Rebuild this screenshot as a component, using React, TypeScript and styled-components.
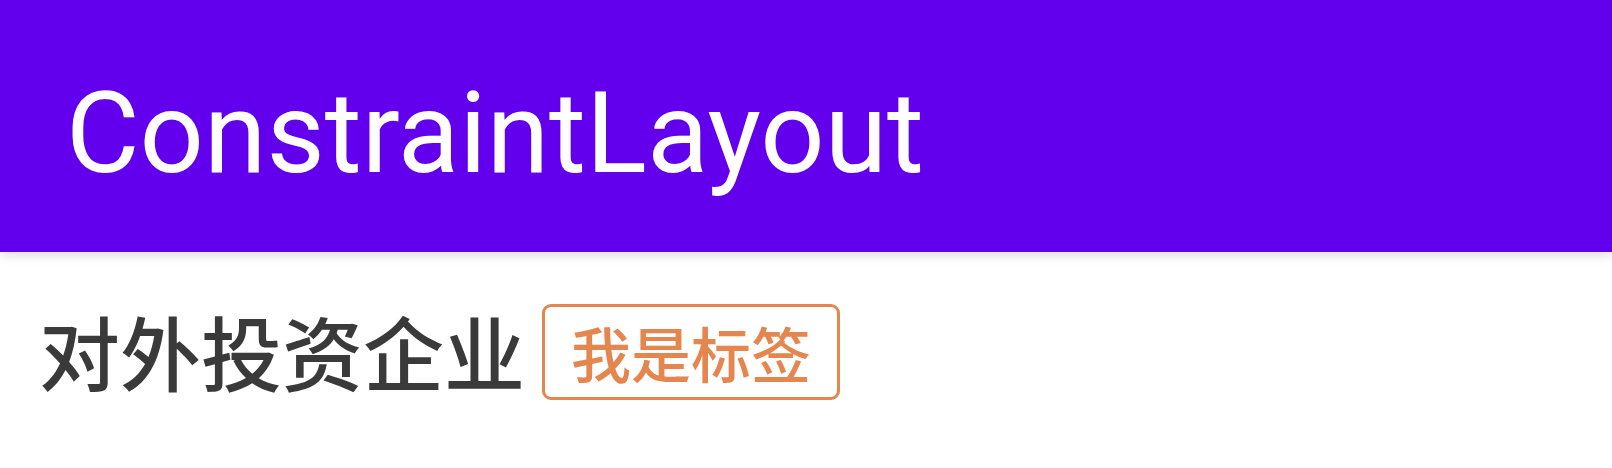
import styled, { createGlobalStyle } from "styled-components";

const GlobalStyle = createGlobalStyle`
  html, body {
    margin: 0;
    padding: 0;
    background: #ffffff;
  }
  body {
    font-family: Roboto, "Noto Sans CJK SC", sans-serif;
  }
`;

const Screen = styled.div`
  width: 1612px;
  height: 468px;
  overflow: hidden;
  background: #ffffff;
`;

const AppBar = styled.header`
  height: 252px;
  background-color: #6200ee;
  display: flex;
  align-items: center;
  padding-left: 66px;
  box-sizing: border-box;
  box-shadow: 0 4px 10px rgba(0, 0, 0, 0.12);
  position: relative;
  z-index: 1;
`;

const Title = styled.h1`
  margin: 0;
  color: #ffffff;
  font-family: Roboto, sans-serif;
  font-weight: 400;
  font-size: 113px;
  line-height: 1;
  margin-top: 15px;
`;

const Content = styled.div`
  display: flex;
  align-items: flex-start;
  gap: 17px;
  padding: 52px 0 0 39px;
`;

const Name = styled.span`
  font-family: "Noto Sans CJK SC", sans-serif;
  font-weight: 500;
  font-size: 81px;
  line-height: 1;
  color: #3a3a3a;
  margin-top: 5px;
`;

const Tag = styled.span<{ tone: string }>`
  display: inline-flex;
  align-items: center;
  justify-content: center;
  box-sizing: border-box;
  height: 96px;
  padding: 0 26px;
  border: 3px solid ${(p) => p.tone};
  border-radius: 9px;
  color: ${(p) => p.tone};
  font-family: "Noto Sans CJK SC", sans-serif;
  font-weight: 500;
  font-size: 60px;
  line-height: 1;
`;

export default function App() {
  return (
    <Screen>
      <GlobalStyle />
      <AppBar>
        <Title>ConstraintLayout</Title>
      </AppBar>
      <Content>
        <Name>对外投资企业</Name>
        <Tag tone="#e5864f">我是标签</Tag>
      </Content>
    </Screen>
  );
}
